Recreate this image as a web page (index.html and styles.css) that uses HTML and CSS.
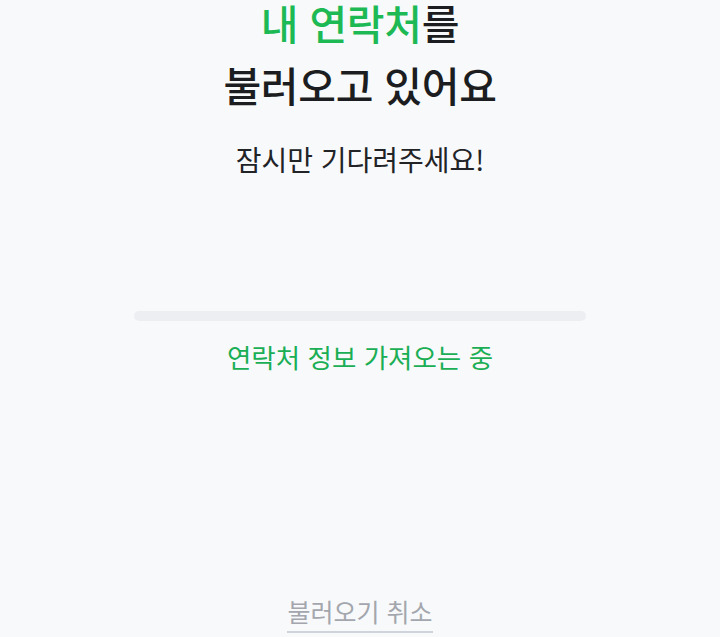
FILE: index.html
```html
<!DOCTYPE html>
<html lang="ko">
<head>
<meta charset="utf-8">
<link rel="stylesheet" href="styles.css">
</head>
<body>
<main class="screen">
  <section class="intro">
    <h1 class="title">
      <span class="title-line"><span class="accent">내 연락처</span>를</span>
      <span class="title-line">불러오고 있어요</span>
    </h1>
    <p class="subtitle">잠시만 기다려주세요!</p>
  </section>
  <section class="progress">
    <div class="track"><div class="fill" style="width:0%"></div></div>
    <p class="status">연락처 정보 가져오는 중</p>
  </section>
  <footer class="actions">
    <button class="cancel" type="button">불러오기 취소</button>
  </footer>
</main>
</body>
</html>
```
FILE: styles.css
```css
html, body {
  margin: 0;
  padding: 0;
  background: #f8f9fb;
}
body {
  font-family: "Noto Sans CJK KR", "Noto Sans", sans-serif;
  height: 637px;
  overflow: hidden;
}
.screen {
  display: flex;
  flex-direction: column;
  align-items: center;
  height: 637px;
}
.intro {
  text-align: center;
}
.title {
  margin: 0;
  display: flex;
  flex-direction: column;
  gap: 18px;
  font-size: 41px;
  font-weight: 500;
  color: #1c1d20;
  letter-spacing: -0.3px;
}
.title-line {
  display: block;
  line-height: 44px;
}
.accent {
  color: #1db954;
}
.subtitle {
  margin: 35px 0 0;
  font-size: 28px;
  line-height: 36px;
  color: #222326;
  font-weight: 400;
}
.progress {
  margin-top: 134px;
  width: 452px;
  display: flex;
  flex-direction: column;
  align-items: center;
}
.track {
  width: 100%;
  height: 10px;
  border-radius: 5px;
  background: #eceef1;
  overflow: hidden;
}
.fill {
  height: 100%;
  background: #1db954;
}
.status {
  margin: 18px 0 0;
  font-size: 26.5px;
  line-height: 36px;
  color: #1aae55;
}
.actions {
  margin-top: auto;
  padding-bottom: 4px;
}
.cancel {
  border: 0;
  background: none;
  padding: 0 0 2px;
  font-family: inherit;
  font-size: 25px;
  line-height: 36px;
  color: #a3a7ad;
  border-bottom: 2px solid #cfd4dc;
}
```
